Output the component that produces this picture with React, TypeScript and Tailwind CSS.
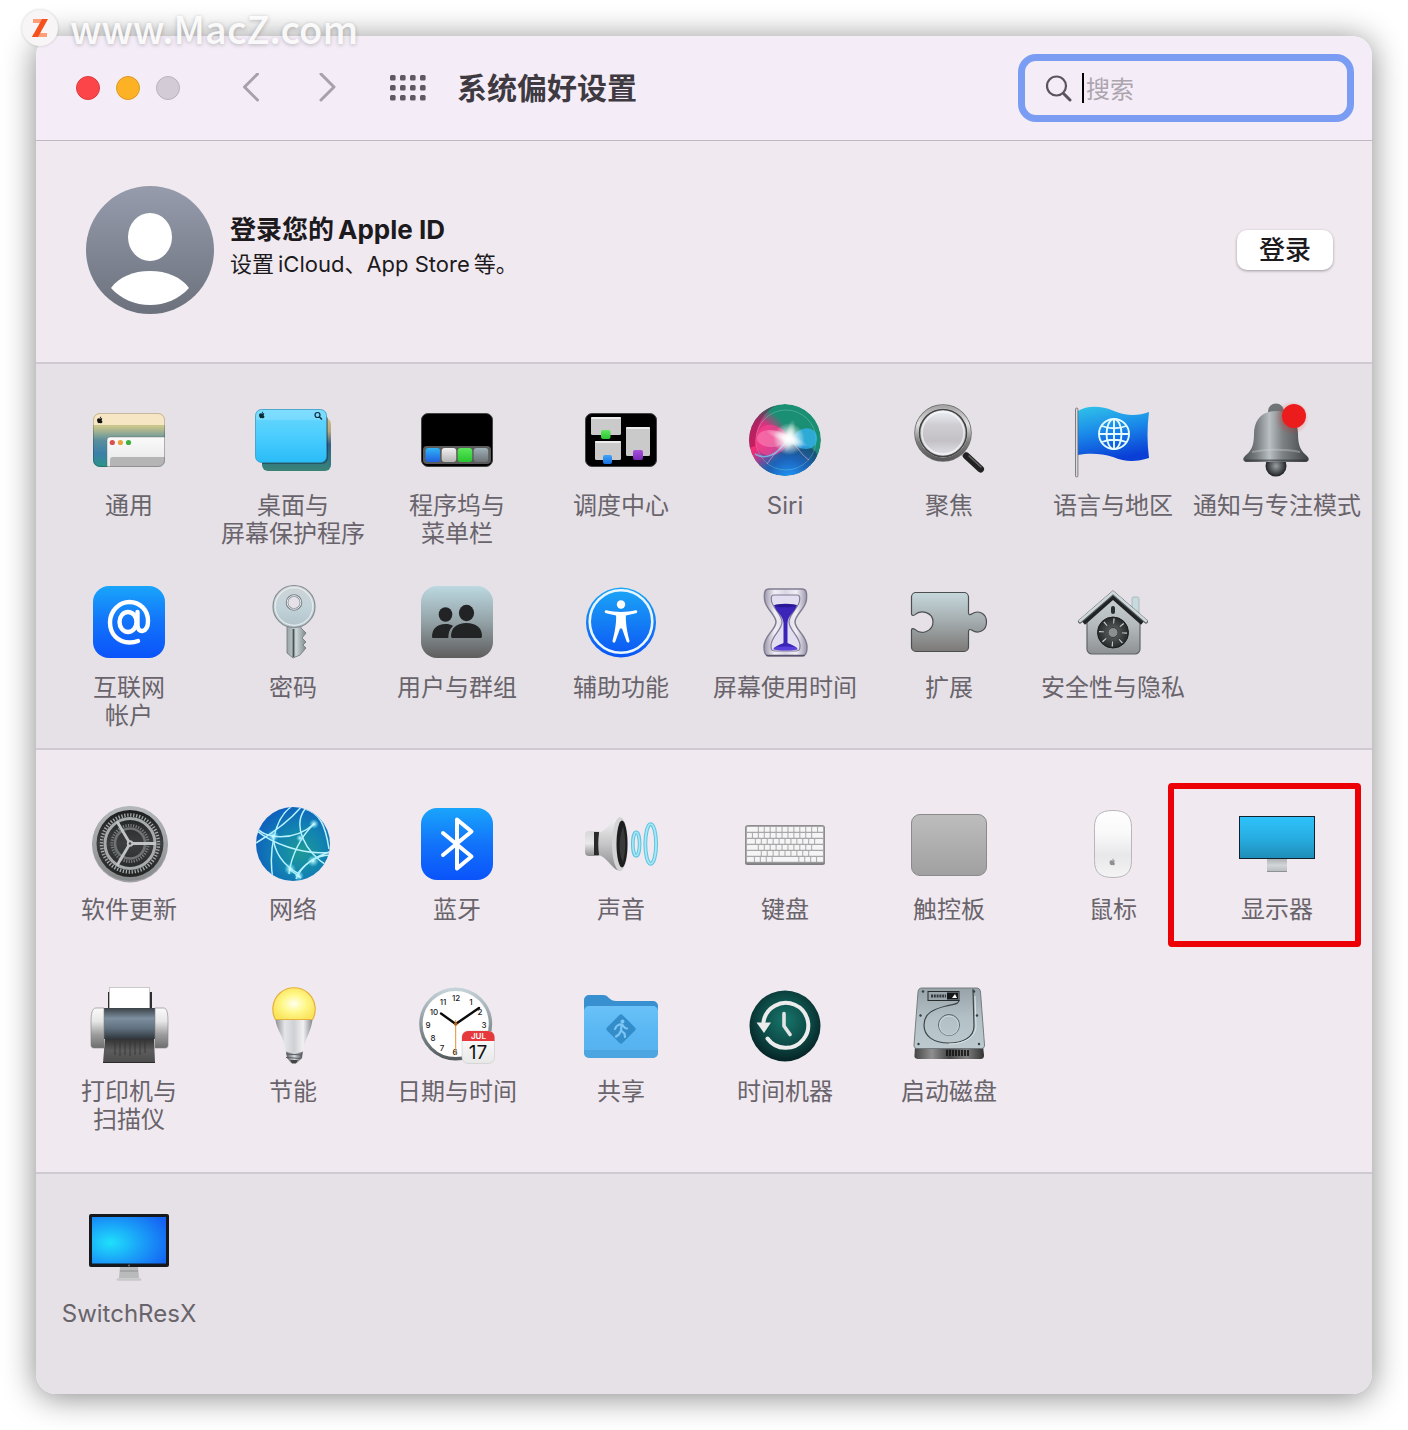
import type { ReactNode } from 'react';

type FadeProps = {
  id: string;
  stops: string[];
  horizontal?: boolean;
};

// evenly spaced linear gradient, top to bottom unless told otherwise
const Fade = ({ id, stops, horizontal }: FadeProps) => (
  <linearGradient id={id} x1="0" y1="0" x2={horizontal ? 1 : 0} y2={horizontal ? 0 : 1}>
    {stops.map((color, i) => (
      <stop key={i} offset={i / (stops.length - 1)} stopColor={color} />
    ))}
  </linearGradient>
);

const Icon = ({ children }: { children: ReactNode }) => (
  <svg viewBox="0 0 84 84" fill="none" className="h-[84px] w-[84px] shrink-0" aria-hidden="true">
    {children}
  </svg>
);

const AppleMark = ({ x, y, size, color }: { x: number; y: number; size: number; color: string }) => (
  <path
    transform={`translate(${x} ${y}) scale(${size / 24})`}
    fill={color}
    d="M17 12.6c0-2.600 2.100-3.800 2.200-3.900-1.200-1.700-3.100-2-3.700-2-1.600-.2-3.100.9-3.900.9s-2-.9-3.300-.9C6.500 6.800 5 7.700 4.100 9.200c-1.800 3.100-.5 7.700 1.300 10.200.9 1.200 1.900 2.600 3.200 2.600 1.300-.1 1.800-.8 3.300-.8 1.600 0 2 .8 3.400.8 1.400 0 2.300-1.300 3.100-2.500 1-1.400 1.400-2.800 1.400-2.900-.1 0-2.800-1.100-2.800-4zM14.500 5C15.200 4.200 15.700 3 15.500 1.800c-1 0-2.300.7-3 1.500-.6.7-1.200 1.900-1 3 1.100.1 2.300-.5 3-1.300z"
  />
);

const GeneralIcon = () => (
  <Icon>
    <defs>
      <Fade id="gen-bg" stops={['#d9cf8b', '#c9c58c', '#5c8f9c', '#3b7fa8', '#2c9487']} />
      <Fade id="gen-win" stops={['#fafafa', '#e6e6e6']} />
      <clipPath id="gen-clip"><rect x="6" y="15" width="72" height="54" rx="7" /></clipPath>
    </defs>
    <g clipPath="url(#gen-clip)">
      <rect x="6" y="15" width="72" height="54" fill="url(#gen-bg)" />
      <rect x="6" y="15" width="72" height="12" fill="#f7e6c4" />
      <path d="M20 69V42a3 3 0 0 1 3-3h55v30z" fill="url(#gen-win)" stroke="#5b6a5b" strokeOpacity=".4" />
      <path d="M23 69v-7a3 3 0 0 1 3-3h52v10z" fill="#b5b5b5" />
    </g>
    <rect x="6.500" y="15.500" width="71" height="53" rx="6.500" stroke="#000" strokeOpacity=".2" />
    <circle cx="25.300" cy="44.500" r="2.600" fill="#d8504f" />
    <circle cx="33.400" cy="44.500" r="2.600" fill="#e6a23c" />
    <circle cx="41.500" cy="44.500" r="2.600" fill="#3fae43" />
    <AppleMark x={9} y={18} size={8} color="#111" />
  </Icon>
);

const DesktopIcon = () => (
  <Icon>
    <defs>
      <Fade id="desk-back" stops={['#d3bd8a', '#b7a77d', '#345f86', '#2f7484', '#3b8377']} />
      <Fade id="desk-front" stops={['#6bd8ff', '#4bcdfd', '#2abcf8']} />
    </defs>
    <rect x="11" y="20" width="69" height="53" rx="6" fill="url(#desk-back)" />
    <path d="M11 66h60a6 6 0 0 0 6-6V20l-4-4v48H11z" fill="#123" opacity=".4" />
    <rect x="4.500" y="11.500" width="71" height="53" rx="6" fill="url(#desk-front)" stroke="#2a93bd" strokeOpacity=".7" />
    <path d="M5 22v-4a6 6 0 0 1 6-6h58a6 6 0 0 1 6 6v4z" fill="#fff" opacity=".15" />
    <AppleMark x={7} y={13} size={8} color="#0b2a38" />
    <circle cx="66.500" cy="17" r="2.500" stroke="#0b2a38" strokeWidth="1.200" />
    <path d="m68.500 19 2.500 2.500" stroke="#0b2a38" strokeWidth="1.400" />
  </Icon>
);

const DockIcon = () => (
  <Icon>
    <defs>
      <Fade id="dock-a" stops={['#2fb4f8', '#1f5fe0']} />
      <Fade id="dock-b" stops={['#f1f1f1', '#b5b5b5']} />
      <Fade id="dock-c" stops={['#5ae85a', '#27c52e']} />
      <Fade id="dock-d" stops={['#9fb0b8', '#6c7377']} />
    </defs>
    <rect x="6.500" y="15.500" width="71" height="53" rx="6.500" fill="#000" stroke="#444" />
    <rect x="8" y="48" width="68" height="18" rx="4" fill="#5b5b5b" />
    <rect x="10.500" y="50" width="14.500" height="14" rx="3" fill="url(#dock-a)" />
    <rect x="26.700" y="50" width="14.500" height="14" rx="3" fill="url(#dock-b)" />
    <rect x="42.700" y="50" width="14.500" height="14" rx="3" fill="url(#dock-c)" />
    <rect x="58.700" y="50" width="14.500" height="14" rx="3" fill="url(#dock-d)" />
  </Icon>
);

const MissionIcon = () => (
  <Icon>
    <defs>
      <Fade id="mis-g" stops={['#5fe55f', '#2bc433']} />
      <Fade id="mis-b" stops={['#3ba4f7', '#1b6fe3']} />
      <Fade id="mis-p" stops={['#a650dd', '#7a2bb8']} />
    </defs>
    <rect x="6.500" y="15.500" width="71" height="53" rx="6.500" fill="#000" stroke="#444" />
    <rect x="12" y="19" width="30" height="18" rx="1.500" fill="#cacaca" />
    <rect x="12" y="19" width="30" height="2" rx="1" fill="#ececec" />
    <rect x="16" y="43" width="26" height="19" rx="1.500" fill="#cacaca" />
    <rect x="16" y="43" width="26" height="2" rx="1" fill="#ececec" />
    <rect x="47" y="29" width="24" height="29" rx="1.500" fill="#cacaca" />
    <rect x="47" y="29" width="24" height="2" rx="1" fill="#ececec" />
    <rect x="22" y="32" width="9.500" height="9" rx="2" fill="url(#mis-g)" />
    <rect x="24" y="57" width="9" height="9" rx="2" fill="url(#mis-b)" />
    <rect x="54" y="52" width="10" height="10" rx="2" fill="url(#mis-p)" />
  </Icon>
);

const SiriIcon = () => (
  <Icon>
    <defs>
      <radialGradient id="siri-pink" gradientUnits="userSpaceOnUse" cx="10" cy="44" r="36">
        <stop offset="0" stopColor="#ff2a78" />
        <stop offset=".6" stopColor="#d6337f" />
        <stop offset="1" stopColor="#d6337f" stopOpacity="0" />
      </radialGradient>
      <radialGradient id="siri-blue" gradientUnits="userSpaceOnUse" cx="46" cy="82" r="44">
        <stop offset="0" stopColor="#1f9bff" />
        <stop offset=".5" stopColor="#1d62b8" />
        <stop offset="1" stopColor="#1d62b8" stopOpacity="0" />
      </radialGradient>
      <radialGradient id="siri-flare">
        <stop offset="0" stopColor="#fff" />
        <stop offset=".35" stopColor="#fff" stopOpacity=".8" />
        <stop offset="1" stopColor="#fff" stopOpacity="0" />
      </radialGradient>
      <clipPath id="siri-clip"><circle cx="42" cy="42" r="36" /></clipPath>
    </defs>
    <g clipPath="url(#siri-clip)">
      <circle cx="42" cy="42" r="36" fill="#1b8f74" />
      <ellipse cx="54" cy="58" rx="20" ry="11" fill="#16304d" opacity=".7" />
      <circle cx="42" cy="42" r="36" fill="url(#siri-pink)" />
      <circle cx="42" cy="42" r="36" fill="url(#siri-blue)" />
      <circle cx="43" cy="42" r="30" stroke="#9fe7d8" strokeOpacity=".3" />
      <path d="M6 50A36 36 0 0 1 34 7C20 14 12 28 12 48z" fill="#7a1140" opacity=".45" />
      <path d="M46 41C40 24 14 20 13 42c0 22 28 20 33-1z" fill="#f0418f" opacity=".75" />
      <path d="M46 41c-8-12-32-12-32 0 0 7 20 14 32 0z" fill="#ffb5d5" opacity=".35" />
      <path d="M48 42c6-14 24-16 26-3 1 16-20 15-26 3z" fill="#35b6ff" opacity=".7" />
      <path d="M46 41 C36 50 28 60 24 66M48 42c8 10 12 16 18 20" stroke="#ffb0c8" strokeOpacity=".6" />
      <path d="M12 56c10 6 22 2 32-14" stroke="#6bd5ff" strokeOpacity=".7" strokeWidth="1.500" />
    </g>
    <circle cx="46" cy="41" r="16" fill="url(#siri-flare)" />
    <ellipse cx="44" cy="41" rx="22" ry="5" transform="rotate(20 46 41)" fill="url(#siri-flare)" opacity=".7" />
    <ellipse cx="46" cy="38" rx="5" ry="17" transform="rotate(12 46 41)" fill="url(#siri-flare)" opacity=".6" />
  </Icon>
);

const SpotlightIcon = () => (
  <Icon>
    <defs>
      <Fade id="spot-ring" stops={['#a6a6a6', '#e2e2e2', '#7d7d7d', '#5a5a5a']} />
      <Fade id="spot-glass" stops={['#eef3f8', '#cfcdd2', '#c4c1c6', '#e2e4ea']} />
    </defs>
    <path d="m54 53 6 6" stroke="#a5a5a5" strokeWidth="6" />
    <path d="m59.500 58 14 13" stroke="#222" strokeWidth="7" strokeLinecap="round" />
    <path d="m62 58 12 11" stroke="#666" strokeWidth="1.500" strokeLinecap="round" />
    <circle cx="36" cy="35" r="27" stroke="#686868" strokeWidth="3.500" />
    <circle cx="36" cy="35" r="26.200" stroke="url(#spot-ring)" strokeWidth="3.500" />
    <circle cx="36" cy="35" r="23.500" fill="url(#spot-glass)" stroke="#444" strokeWidth="1.600" />
    <circle cx="36" cy="35" r="21" stroke="#fff" strokeOpacity=".6" strokeWidth="1.500" />
  </Icon>
);

const FlagIcon = () => (
  <Icon>
    <defs>
      <linearGradient id="flag" x1=".1" y1="0" x2=".35" y2="1">
        <stop offset="0" stopColor="#2fc0e8" />
        <stop offset=".45" stopColor="#1b8cea" />
        <stop offset="1" stopColor="#0a3fd6" />
      </linearGradient>
    </defs>
    <path d="M7 13c8-5 22-6 36 0 12 5 24 5 35 1-2 15-2 31 0 46-13 4-24 4-36-1-12-4-25-4-35-2z" fill="url(#flag)" />
    <rect x="4.500" y="10" width="2.400" height="69" rx="1.200" fill="#d9d9de" stroke="#66666c" strokeWidth=".8" />
    <g stroke="#e4fbff" strokeWidth="1.900">
      <circle cx="43" cy="36" r="15" />
      <ellipse cx="43" cy="36" rx="7.500" ry="15" />
      <path d="M43 21v30M28 36h30M31 28c7 3 17 3 24 0M31 44c7-3 17-3 24 0" />
    </g>
  </Icon>
);

const BellIcon = () => (
  <Icon>
    <defs>
      <Fade id="bell" horizontal stops={['#4b4f51', '#777c7f', '#b9bfc2', '#7d8285', '#5f6365', '#3d4042']} />
      <radialGradient id="bell-drop"><stop offset="0" stopColor="#9aa0a3" /><stop offset="1" stopColor="#1f2224" /></radialGradient>
      <radialGradient id="bell-glow"><stop offset=".5" stopColor="#e81f1f" stopOpacity=".6" /><stop offset="1" stopColor="#e81f1f" stopOpacity="0" /></radialGradient>
    </defs>
    <circle cx="41" cy="68" r="10.500" fill="url(#bell-drop)" />
    <ellipse cx="41" cy="13" rx="8" ry="7.500" fill="#6f7476" />
    <path d="M41 13c-15 0-22 10-22 23 0 12-3 17-9 22-3 3-2 6 2 6h58c4 0 5-3 2-6-6-5-9-10-9-22 0-13-7-23-22-23z" fill="url(#bell)" />
    <path d="M17 54c14-3 34-3 48 0" stroke="#d3d8da" strokeOpacity=".35" strokeWidth="2" />
    <path d="M10 62.500h62" stroke="#2d3032" strokeOpacity=".6" strokeWidth="2" />
    <circle cx="57" cy="20" r="17" fill="url(#bell-glow)" opacity=".5" />
    <circle cx="59" cy="18" r="12" fill="#ec1c1c" />
  </Icon>
);

const InternetIcon = () => (
  <Icon>
    <defs><Fade id="at" stops={['#19a5fb', '#1273fa', '#0a53fa']} /></defs>
    <rect x="6" y="6" width="72" height="72" rx="16" fill="url(#at)" />
    <g stroke="#fff" strokeWidth="4.400" strokeLinecap="round">
      <ellipse cx="41" cy="42" rx="8.500" ry="10" />
      <path d="M50.500 32v13c0 9 10.500 8 10.500-4 0-11-8-19-18.500-19S23 31 23 42.500 31 62.500 42.500 62.500c3.500 0 6-.5 8.500-1.500" />
    </g>
  </Icon>
);

const KeyIcon = () => (
  <Icon>
    <defs>
      <Fade id="key-head" stops={['#cfd4d6', '#c3d3da', '#b2c2c9']} />
      <Fade id="key-shaft" horizontal stops={['#9ba5a8', '#c8d3d6', '#7e888b']} />
    </defs>
    <path d="M36 44h14v4l5 5-4 5 4 4-3 3 3 3-6 7-7 3-6-5z" fill="url(#key-shaft)" stroke="#6d7678" strokeWidth=".8" />
    <path d="M42.500 49v28" stroke="#495154" strokeWidth="1.800" />
    <circle cx="43" cy="26.500" r="21" fill="url(#key-head)" stroke="#858d90" strokeWidth="1.200" />
    <circle cx="43" cy="26.500" r="18.800" stroke="#edf3f5" strokeOpacity=".8" strokeWidth="1.200" />
    <circle cx="43" cy="22.500" r="7" fill="#e6e1e8" stroke="#798286" strokeWidth="2.600" />
    <circle cx="43" cy="22.500" r="6.800" stroke="#e8eff1" strokeWidth="1" />
  </Icon>
);

const UsersIcon = () => (
  <Icon>
    <defs><Fade id="users" stops={['#bcd8e0', '#93a2a7', '#5f5d5d']} /></defs>
    <rect x="6" y="6" width="72" height="72" rx="16" fill="url(#users)" />
    <g fill="#222324">
      <ellipse cx="30.500" cy="34.500" rx="6.800" ry="7.300" />
      <path d="M17 57c0-8 5-13 13.500-13 3 0 5.500.6 7.500 2-3.500 3-4.700 7-4.700 12H19c-1.500 0-2-.4-2-1z" />
      <ellipse cx="51.500" cy="33" rx="7.600" ry="8.300" />
      <path d="M36 56c0-8 6-13 15.500-13S67 48 67 56c0 1.500-.6 2-2 2H38c-1.400 0-2-.5-2-2z" />
    </g>
  </Icon>
);

const AccessibilityIcon = () => (
  <Icon>
    <defs><Fade id="a11y" stops={['#1ba6f7', '#147ef5', '#0a55f5']} /></defs>
    <circle cx="42" cy="42.500" r="35" fill="url(#a11y)" />
    <circle cx="42" cy="41.500" r="31.300" stroke="#e9f6ff" strokeWidth="2.600" />
    <circle cx="42" cy="24.500" r="4.200" fill="#fff" />
    <path d="M27.500 30.300c9 2.200 20 2.200 29 0 2.200-.3 2.400 2.300.4 3l-10 2.300c-.5 7 1.500 17.500 3.500 25 .5 2.300-2 3-2.800 1L43 48.500h-2l-4.600 13.100c-.8 2-3.300 1.300-2.800-1 2-7.500 4-18 3.500-25l-10-2.300c-2-.7-1.800-3.300.4-3z" fill="#fff" />
  </Icon>
);

const HourglassIcon = () => (
  <Icon>
    <defs><Fade id="glass" horizontal stops={['#8f8aa0', '#f4f2fa', '#d9d5e6', '#f4f2fa', '#8f8aa0']} /></defs>
    <path d="M26 9h33c4 0 5 3 4.500 10C63 29 52 34 52 42s12 13 12 25c0 6-1 9-5 9H26c-4 0-5-3-5-9 0-12 12-17 12-25S22 29 21.500 19C21 12 22 9 26 9z" fill="url(#glass)" opacity=".85" stroke="#706b80" strokeWidth="1.500" />
    <path d="M31 15h23c3 0 3 3 2.500 6C55 29 46 34 46 42s10 13 11 23c0 4 0 6-4 6H32c-4 0-4-2-4-6 1-10 11-15 11-23s-9-13-10.500-21C28 18 28 15 31 15z" fill="#e3dff0" stroke="#817b96" strokeWidth="1.200" />
    <path d="M31 25h23c-2 7-9 10-9.500 18v20c4 2 9 3 10 6.500H30.500c1-3.500 6-4.500 10-6.500V43C40 35 33 32 31 25z" fill="#3b25b8" />
    <ellipse cx="42.500" cy="25.500" rx="11" ry="1.800" fill="#2a1796" />
    <ellipse cx="42.500" cy="68.500" rx="12" ry="2" fill="#5a41dd" />
    <path d="M24 75.500h37" stroke="#57526a" strokeWidth="1.600" strokeLinecap="round" />
  </Icon>
);

const PuzzleIcon = () => (
  <Icon>
    <defs><Fade id="puzzle" stops={['#c6d8dc', '#a3abad', '#7c7977']} /></defs>
    <path
      d="M9 12.500h48a4.500 4.500 0 0 1 4.500 4.500v16c0 2 2 2 3.500.8 6-4 14.500-.8 14.500 8.200s-8.500 12.500-14.500 8.200c-1.500-1-3.500-1-3.500.8v16a4.500 4.500 0 0 1-4.500 4.500H9A4.500 4.500 0 0 1 4.500 67V50c0-2 2-1.700 3.500-.6 6 6 18 2 18-7.400s-12-13-18-7.400c-1.500 1.300-3.500 1.300-3.500-.8V17A4.500 4.500 0 0 1 9 12.500z"
      fill="url(#puzzle)"
      stroke="#4c4f50"
      strokeWidth="1.200"
    />
  </Icon>
);

const SecurityIcon = () => (
  <Icon>
    <defs>
      <Fade id="house" stops={['#c9d1d3', '#b6bcbe', '#8d9193']} />
      <radialGradient id="dial"><stop offset="0" stopColor="#666a6b" /><stop offset="1" stopColor="#26292a" /></radialGradient>
    </defs>
    <rect x="61" y="17" width="7" height="24" rx="1.500" fill="#c7dade" stroke="#9fb0b4" strokeWidth=".8" />
    <path d="M16 38 42 14l27 24v31a5 5 0 0 1-5 5H21a5 5 0 0 1-5-5z" fill="url(#house)" stroke="#5f6465" strokeWidth="1.200" />
    <path d="m12 42.500 30-26.500 30 26.500" stroke="#202425" strokeWidth="6" />
    <path d="M9 41.500 42 13l33 28.500" stroke="#5b6162" strokeWidth="4.200" strokeLinecap="round" />
    <path d="M9 41 42 12.500 75 41" stroke="#cfd9dc" strokeWidth="2.600" strokeLinecap="round" />
    <rect x="40" y="26" width="4" height="8" rx="2" fill="#2b2e2f" />
    <circle cx="42" cy="52.500" r="15.500" fill="url(#dial)" stroke="#1c1e1f" />
    <circle cx="42" cy="52.500" r="11.500" stroke="#d1d6d7" strokeWidth="5" strokeDasharray="1.100 7.930" />
    <circle cx="42" cy="52.500" r="5" fill="#8b8f90" stroke="#3a3d3e" />
  </Icon>
);

const UpdateIcon = () => (
  <Icon>
    <defs>
      <Fade id="upd-rim" stops={['#b4b8ba', '#a1a4a6', '#86898a']} />
      <Fade id="upd-in" stops={['#1c1e1e', '#3c3e3f', '#222424']} />
    </defs>
    <circle cx="43" cy="42.500" r="38" fill="#6e7072" opacity=".6" />
    <circle cx="43" cy="41.500" r="37.500" fill="url(#upd-rim)" />
    <circle cx="43" cy="41.500" r="33.500" fill="url(#upd-in)" />
    <circle cx="43" cy="41.500" r="28.500" stroke="#a9acad" strokeWidth="3.500" strokeDasharray="1.300 1.684" />
    <circle cx="43" cy="41.500" r="25" stroke="#a7abac" strokeWidth="3" />
    <circle cx="43" cy="41.500" r="18" stroke="#7b7e7f" strokeWidth="3" strokeDasharray="1.200 1.370" />
    <circle cx="43" cy="41.500" r="15" stroke="#707374" strokeWidth="2.600" />
    <path d="m43 41.500-13-22M43 41.500h26M43 41.500l-13 22" stroke="#c0c4c5" strokeWidth="2.800" />
    <circle cx="43" cy="41.500" r="3.200" fill="#c0c4c5" />
    <circle cx="43" cy="41.500" r="1.300" fill="#444" />
  </Icon>
);

const NetworkIcon = () => (
  <Icon>
    <defs>
      <radialGradient id="net" cx=".6" cy=".6" r=".62">
        <stop offset="0" stopColor="#1f9a94" />
        <stop offset=".5" stopColor="#1284b0" />
        <stop offset="1" stopColor="#0f62bd" />
      </radialGradient>
      <radialGradient id="net-glow"><stop offset="0" stopColor="#dffcff" /><stop offset="1" stopColor="#5fe5ff" stopOpacity="0" /></radialGradient>
      <clipPath id="net-clip"><circle cx="42" cy="42" r="37" /></clipPath>
    </defs>
    <circle cx="42" cy="42" r="37" fill="url(#net)" />
    <g clipPath="url(#net-clip)" stroke="#b8f3ff" strokeWidth="1.500">
      <path d="M5 25c8 12 38 15 58-3M5 41c10-6 32-20 46-37M40 5C24 16 17 48 22 78" />
      <path d="M5 28c14 12 46 26 75 22M22 34c1 14 8 28 26 38M63 22C50 34 40 54 38 72" />
      <path d="M54 7c-12 16-2 42 24 58M54 7c14 4 20 14 24 40M79 50c-14 4-26 12-34 24M45 77c6-14 20-24 34-24M38 67l12 9" />
    </g>
    <circle cx="22" cy="34" r="6" fill="url(#net-glow)" />
    <circle cx="63" cy="22" r="5" fill="url(#net-glow)" />
    <circle cx="49" cy="36" r="4" fill="url(#net-glow)" />
    <circle cx="62" cy="59" r="6" fill="url(#net-glow)" />
    <circle cx="39" cy="67" r="6" fill="url(#net-glow)" />
    <circle cx="48" cy="74" r="5" fill="url(#net-glow)" />
  </Icon>
);

const BluetoothIcon = () => (
  <Icon>
    <defs><Fade id="bt" stops={['#19a5fb', '#1273fa', '#0a53fa']} /></defs>
    <rect x="6" y="6" width="72" height="72" rx="16" fill="url(#bt)" />
    <path d="m28 31 28.500 23.500-14.500 12v-49l14.500 12L28 53" stroke="#fff" strokeWidth="4" strokeLinecap="round" strokeLinejoin="round" />
  </Icon>
);

const SoundIcon = () => (
  <Icon>
    <defs>
      <Fade id="snd" stops={['#f4f4f4', '#c6c6c8', '#8b8b8d']} />
      <Fade id="snd-back" stops={['#d8d8d8', '#e9e9e9', '#8d8d8f']} />
    </defs>
    <rect x="6" y="29" width="16" height="25" rx="4" fill="url(#snd-back)" />
    <rect x="15" y="30" width="5" height="23" fill="#2a2a2b" />
    <path d="M20 31c6-2 10-8 15-13 2-2 5-3 8-2.500v52.500c-3 1-6 0-8-2-5-5-9-11-15-13-1-7-1-15 0-22z" fill="url(#snd)" />
    <ellipse cx="41" cy="42" rx="8" ry="27" fill="#d4d4d6" />
    <ellipse cx="43" cy="42" rx="5.500" ry="23.500" fill="#1e1e1f" />
    <path d="M44 24c3 12 3 24 0 36-3-6-6-18 0-36z" fill="#3a3a3b" />
    <ellipse cx="57.200" cy="42" rx="3.400" ry="11.800" stroke="#5cc4e0" strokeWidth="3.600" />
    <ellipse cx="57.200" cy="42" rx="3.400" ry="11.800" stroke="#a8e7f4" strokeWidth="1.600" />
    <ellipse cx="71.700" cy="42" rx="5.400" ry="19.800" stroke="#5cc4e0" strokeWidth="3.800" />
    <ellipse cx="71.700" cy="42" rx="5.400" ry="19.800" stroke="#a8e7f4" strokeWidth="1.800" />
  </Icon>
);

// key widths of each keyboard row
const keyRows = [
  [11, 5, 5, 5, 5, 5, 5, 5, 5, 5, 5, 5],
  [5, 5, 5, 5, 5, 5, 5, 5, 5, 5, 5, 11],
  [8, 5, 5, 5, 5, 5, 5, 5, 5, 5, 5, 8],
  [11, 5, 5, 5, 5, 5, 5, 5, 5, 5, 11],
  [14, 5, 5, 5, 5, 5, 5, 5, 5, 14],
  [7, 5, 5, 5, 26, 5, 5, 5, 6],
];

const KeyboardIcon = () => (
  <Icon>
    <rect x="2" y="24" width="80" height="39" rx="2.500" fill="#7e7e80" />
    <rect x="2.500" y="23.500" width="79" height="37.500" rx="2" fill="#a8a8aa" stroke="#8e8e90" />
    {keyRows.map((row, r) => {
      const scale = (77 - row.length) / row.reduce((a, b) => a + b, 0);
      let x = 4;
      return row.map((w, i) => {
        const left = x;
        x += w * scale + 1;
        return <rect key={`${r}-${i}`} x={left} y={25 + r * 6} width={w * scale} height="4.800" rx=".6" fill="#f5f5f6" />;
      });
    })}
  </Icon>
);

const TrackpadIcon = () => (
  <Icon>
    <defs><Fade id="pad" stops={['#bdbdbd', '#a0a0a0']} /></defs>
    <rect x="4.500" y="12.500" width="75" height="61" rx="8.500" fill="url(#pad)" stroke="#8b8b8b" />
  </Icon>
);

const MouseIcon = () => (
  <Icon>
    <defs><Fade id="mouse" stops={['#fefefe', '#f9f9fa', '#e8e8ea', '#f4f4f5']} /></defs>
    <path d="M42 8.500c13 0 18.500 5 18.500 17v33c0 12-5.500 17-18.500 17s-18.500-5-18.500-17v-33c0-12 5.500-17 18.500-17z" fill="url(#mouse)" stroke="#b9b5bb" />
    <AppleMark x={37.500} y={56} size={8} color="#8f8f92" />
  </Icon>
);

const DisplayIcon = () => (
  <Icon>
    <defs>
      <Fade id="disp" stops={['#2fc2fb', '#27aee2', '#1f8db8']} />
      <Fade id="disp-stand" stops={['#aeb2b5', '#d3d6d8', '#b9bcbf']} />
    </defs>
    <rect x="32" y="57" width="20" height="12.500" fill="url(#disp-stand)" />
    <path d="M32 69.500h20" stroke="#8f9295" />
    <rect x="4.500" y="14.500" width="75" height="42" fill="url(#disp)" stroke="#10222c" />
  </Icon>
);

const PrinterIcon = () => (
  <Icon>
    <defs>
      <Fade id="prn" stops={['#3a4147', '#7d8fa0', '#5f6f7d', '#2f363c']} />
      <Fade id="prn-cap" stops={['#fafafa', '#e6e6e6', '#9c9c9c', '#6d6d6d']} />
      <Fade id="prn-tray" stops={['#303030', '#5c5c5c', '#4c4c4c']} />
    </defs>
    <path d="M21 8h44v18H21z" fill="#2e2e30" />
    <rect x="22.500" y="3.500" width="40" height="23" fill="#fff" stroke="#bfbfbf" strokeWidth=".8" />
    <path d="M18 54h49l1 25H16z" fill="url(#prn-tray)" />
    <path d="M16 78.500h52" stroke="#2a2a2a" />
    <path d="M28 57v14M33 57v15M38 57v14M43 57v15M48 57v14M53 57v14M58 57v12" stroke="#333" strokeWidth=".8" />
    <rect x="16" y="24" width="53" height="31" fill="url(#prn)" />
    <path d="M9 24h8v40H7c-2 0-3-1-3-3V38c0-8 1-14 5-14zM77 24h-9v40h10c2 0 3-1 3-3V38c0-8-1-14-4-14z" fill="url(#prn-cap)" stroke="#808080" strokeWidth=".6" />
  </Icon>
);

const BulbIcon = () => (
  <Icon>
    <defs>
      <radialGradient id="bulb" cx=".5" cy=".5" r=".55">
        <stop offset="0" stopColor="#fffff0" />
        <stop offset=".5" stopColor="#fff88c" />
        <stop offset="1" stopColor="#fae45c" />
      </radialGradient>
      <Fade id="bulb-base" horizontal stops={['#8e9095', '#e4e5e8', '#cfd0d4', '#f1f1f3', '#85878c']} />
      <Fade id="bulb-screw" horizontal stops={['#55585c', '#d6d9dc', '#46494d']} />
    </defs>
    <path d="M35 66h17l-1 8-5 5h-6l-4-5z" fill="url(#bulb-screw)" />
    <path d="m35 70 16 1M35 73.500l15 1" stroke="#5a5e63" strokeWidth="1.200" />
    <path d="M39 76h8l-2 3.500h-4z" fill="#444" />
    <path d="M24.500 36h37c-1 6-2 9-4 14-3 6-4 10-5 16-.2 2-2 3-9 3s-8.800-1-9-3c-1-6-2-10-5-16-2.500-5-4.500-9-5-14z" fill="url(#bulb-base)" />
    <path d="M24.500 35.500C20 28 21 16 29 9c8-7 20-7 28 0s9 19 4.500 26.500z" fill="url(#bulb)" stroke="#e6b03c" strokeWidth="1.200" />
  </Icon>
);

const clockNumbers = [
  ['12', 41, 17], ['1', 56, 21], ['2', 65, 31], ['3', 69, 43.500], ['6', 40, 71], ['7', 27, 67],
  ['8', 18, 57], ['9', 13, 43.500], ['10', 19, 31], ['11', 28, 21],
] as const;

const DateIcon = () => (
  <Icon>
    <defs>
      <Fade id="clk" stops={['#c5d3d9', '#8d989d', '#555b5e']} />
      <Fade id="cal" stops={['#ffffff', '#e8e8e8']} />
    </defs>
    <circle cx="40.700" cy="40" r="34.800" fill="#fff" stroke="url(#clk)" strokeWidth="3.400" />
    <g fill="#222" fontFamily="Inter, 'Liberation Sans', sans-serif" fontSize="8" fontWeight="500" textAnchor="middle">
      {clockNumbers.map(([n, x, y]) => (
        <text key={n} x={x} y={y}>{n}</text>
      ))}
    </g>
    <path d="M26 29.500 40.700 40 64 24" stroke="#0b0b0b" strokeWidth="2.400" strokeLinecap="round" />
    <path d="M40.700 36v35" stroke="#e5902d" strokeWidth="1" />
    <circle cx="40.700" cy="40" r="1.800" fill="#b15e13" />
    <rect x="47" y="47" width="32.500" height="32.500" rx="6" fill="url(#cal)" stroke="#c9c9c9" strokeWidth=".6" />
    <path d="M47 57v-4a6 6 0 0 1 6-6h20.500a6 6 0 0 1 6 6v4z" fill="#e5393d" />
    <text x="63.500" y="55" fill="#fff" fontFamily="Inter, 'Liberation Sans', sans-serif" fontSize="8" fontWeight="600" textAnchor="middle">JUL</text>
    <text x="63" y="75" fill="#111" fontFamily="Inter, 'Liberation Sans', sans-serif" fontSize="19" textAnchor="middle">17</text>
  </Icon>
);

const SharingIcon = () => (
  <Icon>
    <defs><Fade id="folder" stops={['#69c1f7', '#5ab7f3', '#55b0ec']} /></defs>
    <path d="M5 30V16a5 5 0 0 1 5-5h14c3 0 4 1 6 3s4 3 7 3h37a5 5 0 0 1 5 5v12z" fill="#3990d0" />
    <path d="M5 27a5 5 0 0 1 5-5h64a5 5 0 0 1 5 5v42a5 5 0 0 1-5 5H10a5 5 0 0 1-5-5z" fill="url(#folder)" />
    <path d="M5 66h74v3a5 5 0 0 1-5 5H10a5 5 0 0 1-5-5z" fill="#469cd9" opacity=".6" />
    <rect x="31" y="34" width="22" height="22" rx="2.500" transform="rotate(45 42 45)" fill="#348dcb" />
    <circle cx="43.500" cy="37.500" r="2" fill="#7cc6f5" />
    <path d="M36 45c1-3 4-5 7-4.500 1.500 1 2 4 5 4M42.500 41.500l-.5 5 3.500 3 .5 3.500M42 46.500l-2 4-3 2" stroke="#7cc6f5" strokeWidth="2.200" strokeLinecap="round" strokeLinejoin="round" />
  </Icon>
);

const TimeMachineIcon = () => (
  <Icon>
    <defs>
      <radialGradient id="tm" cx=".5" cy=".42" r=".58">
        <stop offset="0" stopColor="#17756b" />
        <stop offset=".6" stopColor="#0d4a46" />
        <stop offset="1" stopColor="#062325" />
      </radialGradient>
    </defs>
    <circle cx="42" cy="42" r="35.500" fill="url(#tm)" />
    <path d="M20.500 38A22.500 22.500 0 1 1 24.500 54.500" stroke="#ececec" strokeWidth="4" strokeLinecap="round" />
    <path d="M13.500 38.500h14.500L21 49z" fill="#ececec" />
    <path d="M41 29.500V42l6 8.500" stroke="#e4e4e4" strokeWidth="3.600" strokeLinecap="round" strokeLinejoin="round" />
  </Icon>
);

const DiskIcon = () => (
  <Icon>
    <defs>
      <Fade id="disk" stops={['#97a3a8', '#b3c0c5', '#bccacf']} />
      <Fade id="disk-base" horizontal stops={['#444', '#8f8f8f', '#444', '#7d7d7d', '#333']} />
    </defs>
    <path d="M8 62h68l1 9c0 3-1 4-4 4H12c-3 0-5-1-4.500-4z" fill="url(#disk-base)" />
    <path d="M40 66v6M43 66v6M46 66v6M49 66v6M52 66v6M55 66v6M58 66v6M61 66v6" stroke="#0f0f0f" strokeWidth="1.600" />
    <path d="M15 4h54c3 0 4 1 4.500 4l4 53c0 2.500-1 3.500-3 3.500H10c-2 0-3-1-3-3.500l4-53C11.500 5 12.500 4 15 4z" fill="url(#disk)" stroke="#6b7478" strokeWidth=".9" />
    <path d="M66 5l1 37c0 12-12 17-25 17-16 0-25-7-25-18 0-12 10-16 22-19 9-2 13-2 13-6" stroke="#3d4649" strokeWidth="1.200" />
    <path d="M68 12l1 30c0 11-12 18-27 18" stroke="#e1eaed" strokeWidth=".9" />
    <circle cx="42" cy="41" r="10.500" stroke="#5c666a" strokeWidth="1" />
    <circle cx="42" cy="41.500" r="9.500" stroke="#dbe5e8" strokeWidth=".7" />
    <rect x="21" y="7.500" width="31" height="9" fill="#9aa5aa" stroke="#272c2e" />
    <path d="M24 12h15" stroke="#33383a" strokeWidth="3" strokeDasharray="2 .8" />
    <path d="M40 8.500h11v7H40z" fill="#15181a" />
    <path d="m45 14 3-4 2 4z" fill="#fff" />
    <g fill="#333b3e">
      <circle cx="16" cy="7.500" r="1.200" /><circle cx="67" cy="7.500" r="1.200" />
      <circle cx="13.500" cy="31.500" r="1.200" /><circle cx="70" cy="31.500" r="1.200" />
      <circle cx="11.500" cy="60" r="1.200" /><circle cx="72" cy="60" r="1.200" />
    </g>
  </Icon>
);

const SwitchResXIcon = () => (
  <Icon>
    <defs>
      <radialGradient id="srx" cx=".25" cy=".55" r=".85">
        <stop offset="0" stopColor="#1fe0fb" />
        <stop offset=".5" stopColor="#1a9ff8" />
        <stop offset="1" stopColor="#1463f2" />
      </radialGradient>
    </defs>
    <path d="M33 61h18l1 11H32z" fill="#b8babc" />
    <path d="M33 65h18" stroke="#8e9092" />
    <path d="M31 73.500h22" stroke="#c6c8ca" strokeWidth="2.400" strokeLinecap="round" />
    <rect x="2" y="8" width="80" height="53" rx="2" fill="#15191d" />
    <rect x="5" y="11" width="74" height="46.500" fill="url(#srx)" />
    <circle cx="42" cy="59.500" r=".9" fill="#777" />
  </Icon>
);

type Pane = {
  lines: string[];
  icon: ReactNode;
  marked?: boolean;
};

const personalPanes: Pane[] = [
  { lines: ['通用'], icon: <GeneralIcon /> },
  { lines: ['桌面与', '屏幕保护程序'], icon: <DesktopIcon /> },
  { lines: ['程序坞与', '菜单栏'], icon: <DockIcon /> },
  { lines: ['调度中心'], icon: <MissionIcon /> },
  { lines: ['Siri'], icon: <SiriIcon /> },
  { lines: ['聚焦'], icon: <SpotlightIcon /> },
  { lines: ['语言与地区'], icon: <FlagIcon /> },
  { lines: ['通知与专注模式'], icon: <BellIcon /> },
  { lines: ['互联网', '帐户'], icon: <InternetIcon /> },
  { lines: ['密码'], icon: <KeyIcon /> },
  { lines: ['用户与群组'], icon: <UsersIcon /> },
  { lines: ['辅助功能'], icon: <AccessibilityIcon /> },
  { lines: ['屏幕使用时间'], icon: <HourglassIcon /> },
  { lines: ['扩展'], icon: <PuzzleIcon /> },
  { lines: ['安全性与隐私'], icon: <SecurityIcon /> },
];

const hardwarePanes: Pane[] = [
  { lines: ['软件更新'], icon: <UpdateIcon /> },
  { lines: ['网络'], icon: <NetworkIcon /> },
  { lines: ['蓝牙'], icon: <BluetoothIcon /> },
  { lines: ['声音'], icon: <SoundIcon /> },
  { lines: ['键盘'], icon: <KeyboardIcon /> },
  { lines: ['触控板'], icon: <TrackpadIcon /> },
  { lines: ['鼠标'], icon: <MouseIcon /> },
  { lines: ['显示器'], icon: <DisplayIcon />, marked: true },
  { lines: ['打印机与', '扫描仪'], icon: <PrinterIcon /> },
  { lines: ['节能'], icon: <BulbIcon /> },
  { lines: ['日期与时间'], icon: <DateIcon /> },
  { lines: ['共享'], icon: <SharingIcon /> },
  { lines: ['时间机器'], icon: <TimeMachineIcon /> },
  { lines: ['启动磁盘'], icon: <DiskIcon /> },
];

const extraPanes: Pane[] = [{ lines: ['SwitchResX'], icon: <SwitchResXIcon /> }];

const PaneGrid = ({ panes }: { panes: Pane[] }) => (
  <div className="grid grid-cols-8 gap-y-8 pl-[11px] pr-[13px]">
    {panes.map((pane) => (
      <button key={pane.lines[0]} type="button" className="relative flex min-w-0 flex-col items-center">
        {pane.icon}
        <span className="mt-[10px] flex min-h-14 flex-col items-center text-2xl leading-7 whitespace-nowrap text-[#69646b]">
          {pane.lines.map((line) => (
            <span key={line}>{line}</span>
          ))}
        </span>
        {pane.marked && (
          <span className="absolute -top-[19px] -right-[2px] bottom-[5px] -left-[27px] rounded-sm border-6 border-[#ec0006]" />
        )}
      </button>
    ))}
  </div>
);

const TitleBar = () => (
  <header className="flex h-[105px] items-center rounded-t-[20px] border-b border-[#bfb8c2] bg-[#f4edf7] pr-[18px] pl-10">
    <div className="flex gap-4">
      <button type="button" aria-label="关闭" className="h-6 w-6 rounded-full border border-[#de3a3c] bg-[#fc4548]" />
      <button type="button" aria-label="最小化" className="h-6 w-6 rounded-full border border-[#dd9a1c] bg-[#fdb124]" />
      <button type="button" aria-label="缩放" className="h-6 w-6 rounded-full border border-[#b9b2bc] bg-[#d3ccd6]" />
    </div>
    <div className="ml-[61px] flex gap-14">
      <button type="button" aria-label="后退">
        <svg viewBox="0 0 20 30" className="h-[30px] w-5" fill="none" stroke="#a8a1aa" strokeWidth="3" strokeLinecap="round" strokeLinejoin="round">
          <path d="M16.500 1 3.500 14l13 13" />
        </svg>
      </button>
      <button type="button" aria-label="前进">
        <svg viewBox="0 0 20 30" className="h-[30px] w-5" fill="none" stroke="#a8a1aa" strokeWidth="3" strokeLinecap="round" strokeLinejoin="round">
          <path d="m4 1 13 13L4 27" />
        </svg>
      </button>
    </div>
    <button type="button" aria-label="显示全部" className="ml-[53px]">
      <svg viewBox="0 0 36 26" className="h-[26px] w-9" fill="#5f5862">
        {[0, 10, 20].map((y) =>
          [0, 10, 20, 30].map((x) => <rect key={`${x}-${y}`} x={x} y={y} width="5.600" height="5.600" rx="1.500" />)
        )}
      </svg>
    </button>
    <h1 className="ml-[31px] text-3xl leading-9 font-bold text-[#3f3a42]">系统偏好设置</h1>
    <label className="ml-auto flex h-[68px] w-[336px] items-center rounded-[18px] border-7 border-[#7a9cf2] pl-5">
      <svg viewBox="0 0 28 28" className="h-7 w-7" fill="none" stroke="#5a545c" strokeWidth="2.200" strokeLinecap="round">
        <circle cx="11.500" cy="12" r="9.500" />
        <path d="m19 20 6 6" strokeWidth="3" />
      </svg>
      <span className="ml-[9px] h-[30px] w-[2px] bg-black" />
      <input type="search" aria-label="搜索" placeholder="搜索" className="ml-[2px] w-0 flex-1 bg-transparent pt-1 text-2xl leading-8 outline-none placeholder:text-[#aca5ae]" />
    </label>
  </header>
);

const AccountSection = () => (
  <section className="flex items-center border-b-2 border-[#cfc9d1] bg-[#f0e9f0] pt-[45px] pr-[39px] pb-12 pl-[50px]">
    <svg viewBox="0 0 128 128" className="h-32 w-32" aria-hidden="true">
      <defs>
        <Fade id="avatar" stops={['#969cac', '#6c717d']} />
      </defs>
      <circle cx="64" cy="64" r="64" fill="url(#avatar)" />
      <ellipse cx="64" cy="51" rx="22" ry="24" fill="#fff" />
      <path d="M25 102c8-11 22-17 39-17s31 6 39 17c-10 11-24 17-39 17s-29-6-39-17z" fill="#fff" />
    </svg>
    <div className="ml-4 pb-2 text-[#1c1a1d]">
      <h2 className="text-[26px] leading-9 font-bold">登录您的<span className="ml-1">Apple ID</span></h2>
      <p className="text-[22px] leading-8">设置<span className="ml-1">iCloud、App Store</span><span className="ml-1">等。</span></p>
    </div>
    <button type="button" className="ml-auto h-10 w-24 rounded-[10px] bg-white text-[26px] leading-9 font-medium text-[#1c1a1d] shadow-[0_1px_3px_rgba(0,0,0,0.35)]">
      登录
    </button>
  </section>
);

const Watermark = () => (
  <div className="absolute top-0 left-[22px] flex h-14 items-center gap-3">
    <span className="flex h-9 w-9 items-center justify-center rounded-full bg-[#f8f5f6] shadow-[0_0_3px_rgba(0,0,0,0.2)]">
      <svg viewBox="0 0 20 20" className="h-5 w-5" aria-hidden="true">
        <path d="M3 1h13l-2 4H3zM4 15h13v4H2z" fill="#ff9d78" />
        <path d="M12 1h6L8 19H2z" fill="#f4511e" />
      </svg>
    </span>
    <span className="font-['Noto_Sans_CJK_SC',sans-serif] text-[38px] leading-[56px] font-medium text-white/90 [text-shadow:0_1px_4px_rgba(0,0,0,0.25)]">
      www.MacZ.com
    </span>
  </div>
);

const App = () => {
  return (
    <div lang="zh-CN" className="relative bg-white p-9 font-['Inter','Noto_Sans_CJK_SC',sans-serif]">
      <main className="rounded-[20px] shadow-[0_3px_32px_rgba(0,0,0,0.48)]">
        <TitleBar />
        <AccountSection />
        <section className="border-b-2 border-[#cfc9d1] bg-[#e5e1e7] pt-[34px] pb-[18px]">
          <PaneGrid panes={personalPanes} />
        </section>
        <section className="border-b-2 border-[#cfc9d1] bg-[#f0e9f0] pt-[52px] pb-[38px]">
          <PaneGrid panes={hardwarePanes} />
        </section>
        <section className="rounded-b-[20px] bg-[#e5e1e7] pt-8 pb-[38px]">
          <PaneGrid panes={extraPanes} />
        </section>
      </main>
      <Watermark />
    </div>
  );
};

export default App;
